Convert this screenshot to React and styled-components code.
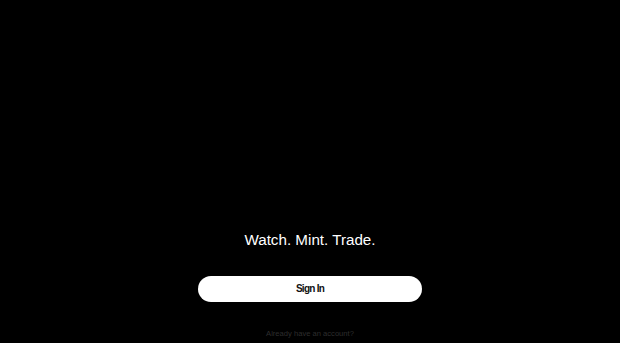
import React from "react";
import styled, { createGlobalStyle } from "styled-components";

const Global = createGlobalStyle`
  html, body { margin: 0; padding: 0; background: #000; }
  body { font-family: "Liberation Sans", Arial, sans-serif; overflow: hidden; }
`;

const Screen = styled.main`
  height: 343px;
  display: flex;
  flex-direction: column;
  align-items: center;
  justify-content: flex-end;
  background: #000;
  padding-bottom: 4px;
  box-sizing: border-box;
`;

const Tagline = styled.h1`
  margin: 0 0 27px;
  color: #fff;
  font-size: 15.2px;
  font-weight: 400;
  line-height: 18px;
`;

const PrimaryButton = styled.button`
  width: 224px;
  height: 26px;
  border: none;
  border-radius: 13px;
  background: #fff;
  color: #111;
  font-family: "Liberation Sans", Arial, sans-serif;
  font-weight: 700;
  font-size: 10px;
  line-height: 25px;
  letter-spacing: -0.75px;
  padding: 0 0 1px;
  cursor: pointer;
`;

const Hint = styled.p`
  margin: 27px 0 0;
  color: #2e2e2e;
  font-size: 7.6px;
  line-height: 10px;
`;

export default function App() {
  return (
    <>
      <Global />
      <Screen>
        <Tagline>Watch. Mint. Trade.</Tagline>
        <PrimaryButton>Sign In</PrimaryButton>
        <Hint>Already have an account?</Hint>
      </Screen>
    </>
  );
}
